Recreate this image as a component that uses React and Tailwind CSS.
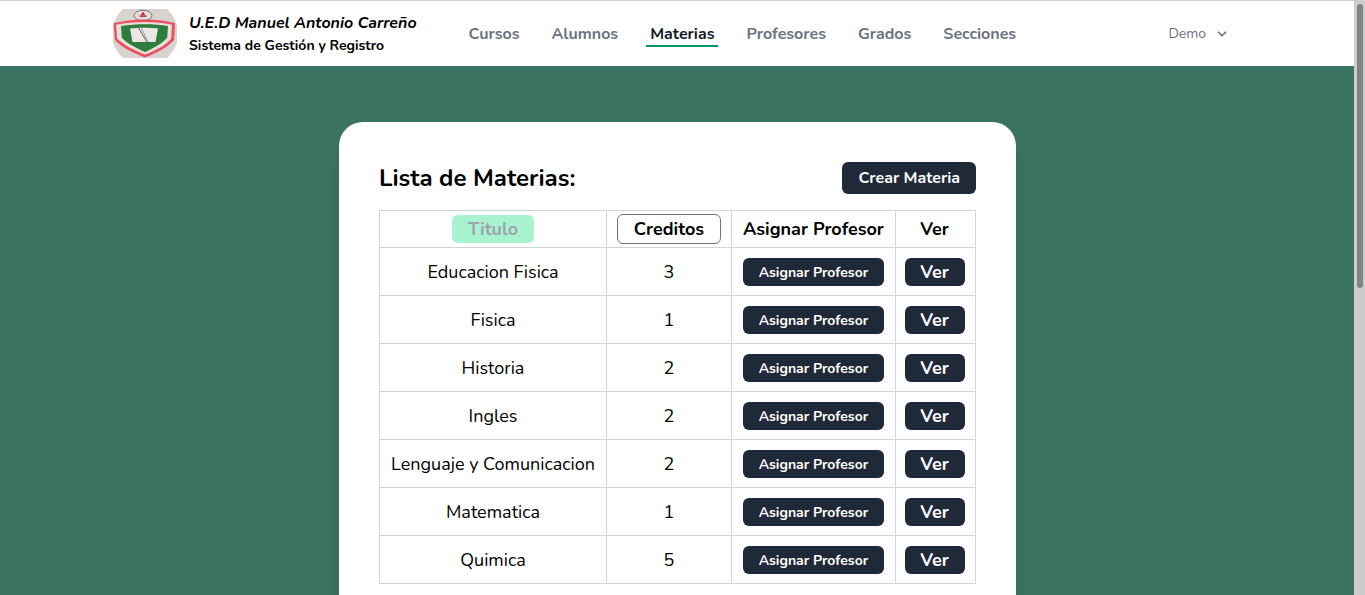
import { ChevronDown } from "lucide-react";

const materias = [
  { titulo: "Educacion Fisica", creditos: 3 },
  { titulo: "Fisica", creditos: 1 },
  { titulo: "Historia", creditos: 2 },
  { titulo: "Ingles", creditos: 2 },
  { titulo: "Lenguaje y Comunicacion", creditos: 2 },
  { titulo: "Matematica", creditos: 1 },
  { titulo: "Quimica", creditos: 5 },
];

const navLinks = ["Cursos", "Alumnos", "Materias", "Profesores", "Grados", "Secciones"];

function Logo() {
  return (
    <svg width="64" height="49" viewBox="0 0 64 49" className="shrink-0">
      <defs>
        <filter id="logo-blur" x="-5%" y="-5%" width="110%" height="110%">
          <feGaussianBlur stdDeviation="0.55" />
        </filter>
        <clipPath id="logo-clip">
          <circle cx="32" cy="24.5" r="33" />
        </clipPath>
      </defs>
      <g clipPath="url(#logo-clip)">
        <g filter="url(#logo-blur)">
          <rect x="-2" y="-2" width="68" height="53" fill="#d8d3cf" />
          <ellipse cx="30" cy="6.500" rx="9" ry="5.200" fill="#e2dedb" stroke="#6f6a66" strokeWidth="0.9" />
          <path d="M30 2.500l2.600 4h-5.200z" fill="#c9303c" />
          <rect x="26.500" y="6.500" width="7" height="1.400" fill="#a8343c" />
          <path d="M0.500 14C13 11.500 22 10.500 32 10.500s20 1 30 3.500l-1 17C55 38 44 44 32 48.500 20 44 8 38 2 31z" fill="#e9505f" />
          <path d="M3 15.800c9-1.800 19-2.800 29-2.800s19 1 27 2.800l-.8 14C53 36 43 41.500 32 45.500 21 41.500 11 36 4.200 29.800z" fill="#e6dedb" />
          <path d="M8 17c8-1.300 16-1.800 24-1.800s16 .5 23 1.800l-.8 11.500C50 34 41 39 32 43 23 39 13 34 8.800 28.500z" fill="#2f7d3e" />
          <path d="M17 19.500c6-1 22-1 28 0l-2.500 13.500h-23z" fill="#ece7e3" />
          <path d="M25 18l9 15" stroke="#55605a" strokeWidth="1" />
          <path d="M28 18l7 15" stroke="#8a8f8c" strokeWidth="0.8" />
        </g>
      </g>
    </svg>
  );
}

function Navbar() {
  return (
    <nav className="h-[65px] shrink-0 bg-white flex items-center pl-[113px] pr-[125px]">
      <Logo />
      <div className="ml-3 w-[279.500px]">
        <p className="text-base leading-6 font-bold italic text-black">
          U.E.D Manuel Antonio Carreño
        </p>
        <p className="text-sm leading-5 font-bold text-black mt-[1px]">
          Sistema de Gestión y Registro
        </p>
      </div>
      <div className="flex items-center gap-8 h-full">
        {navLinks.map((link) => (
          <a
            key={link}
            className={
              link === "Materias"
                ? "relative text-base font-bold text-[#111827] after:absolute after:left-[-4px] after:right-[-4px] after:-bottom-[1px] after:h-[2px] after:bg-[#059669]"
                : "text-base font-bold text-[#6b7280]"
            }
          >
            {link}
          </a>
        ))}
      </div>
      <button className="ml-auto flex items-center gap-[9px] text-sm text-[#6b7280]">
        Demo
        <ChevronDown size={14} strokeWidth={3} />
      </button>
    </nav>
  );
}

function App() {
  return (
    <div className="h-[595px] flex flex-col overflow-hidden border-t border-[#d4d0cb] font-['Nunito','Noto_Sans',sans-serif]">
      <div className="flex-1 min-h-0 flex">
        <div className="flex-1 min-w-0 flex flex-col">
          <Navbar />
          <main className="flex-1 bg-[#3a7361] pt-14 pl-px flex justify-center overflow-hidden">
            <div className="w-[677px] h-[700px] shrink-0 bg-white rounded-3xl p-10 shadow-xl">
              <div className="flex items-center justify-between h-8 mb-4">
                <h1 className="text-2xl font-bold text-black">Lista de Materias:</h1>
                <button className="h-8 px-4 rounded-md bg-[#1f2937] text-white text-base font-bold">
                  Crear Materia
                </button>
              </div>
              <table className="w-[596px] table-fixed border-collapse text-black text-lg">
                <colgroup>
                  <col className="w-[227px]" />
                  <col className="w-[125px]" />
                  <col className="w-[164px]" />
                  <col className="w-[80px]" />
                </colgroup>
                <thead>
                  <tr className="h-[37px]">
                    <th className="border border-[#d1d5db] font-bold">
                      <span className="inline-block align-middle -mt-[2px] w-[82px] h-[28px] leading-[28px] rounded-md bg-[#a7f3d0] text-[#9ca3af]">
                        Titulo
                      </span>
                    </th>
                    <th className="border border-[#d1d5db] font-bold">
                      <span className="inline-block align-middle w-[104px] h-[30px] leading-[28px] rounded-md border border-[#6b7280]">
                        Creditos
                      </span>
                    </th>
                    <th className="border border-[#d1d5db] font-bold">Asignar Profesor</th>
                    <th className="border border-[#d1d5db] font-bold pr-0.5">Ver</th>
                  </tr>
                </thead>
                <tbody>
                  {materias.map((m) => (
                    <tr key={m.titulo} className="h-[48px]">
                      <td className="border border-[#d1d5db] text-center">{m.titulo}</td>
                      <td className="border border-[#d1d5db] text-center">{m.creditos}</td>
                      <td className="border border-[#d1d5db] text-center">
                        <button className="w-[141px] h-7 pt-[1px] align-middle rounded-md bg-[#1f2937] text-white text-sm font-bold">
                          Asignar Profesor
                        </button>
                      </td>
                      <td className="border border-[#d1d5db] text-center pr-0.5">
                        <button className="w-[60px] h-7 align-middle rounded-md bg-[#1f2937] text-white text-lg font-bold">
                          Ver
                        </button>
                      </td>
                    </tr>
                  ))}
                </tbody>
              </table>
            </div>
          </main>
        </div>
        <div className="w-[11px] shrink-0 bg-[#cccccc] flex justify-center">
          <div className="w-[6px] h-[284px] mt-[3px] rounded-full bg-[#7f8583]" />
        </div>
      </div>
    </div>
  );
}

export default App;
